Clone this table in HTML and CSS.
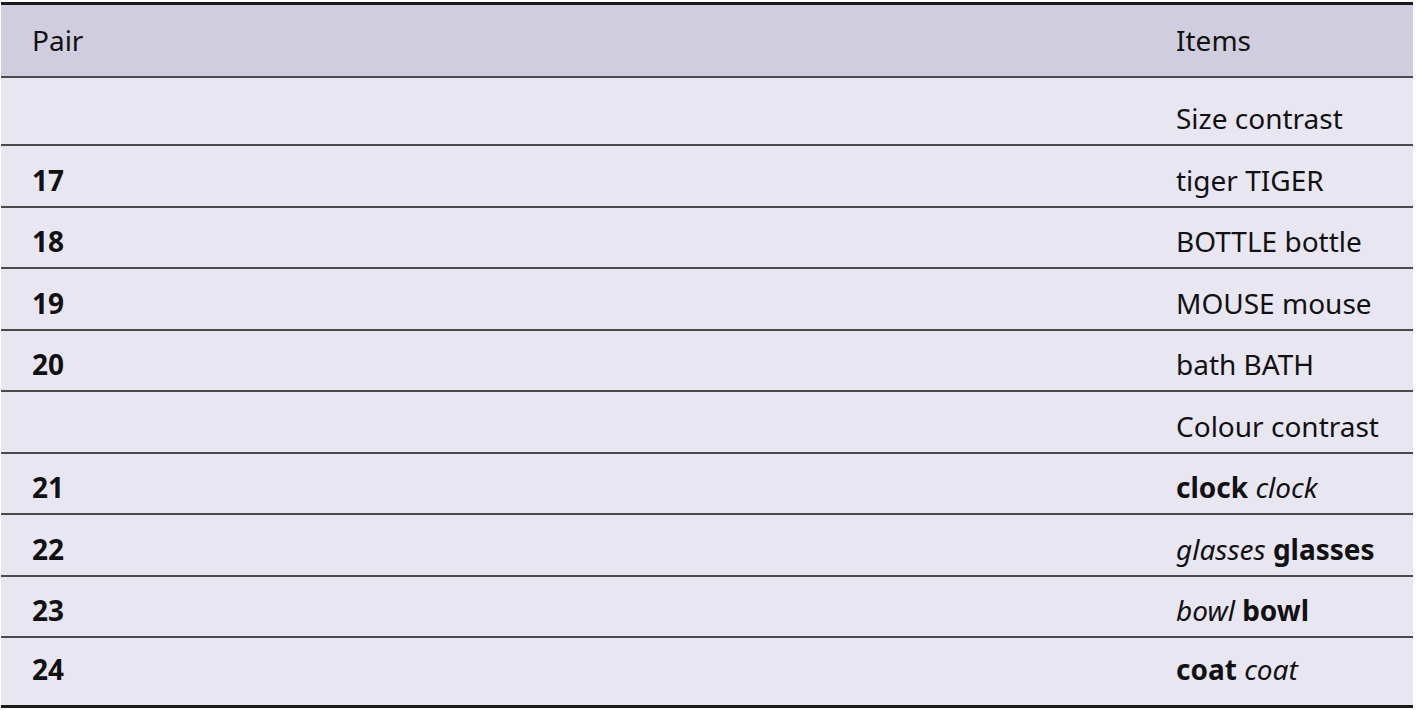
FILE: index.html
```html
<!DOCTYPE html>
<html lang="en">
<head>
<meta charset="utf-8">
<title>Pairs</title>
<link rel="stylesheet" href="styles.css">
</head>
<body>
<table class="pairs">
  <thead>
    <tr class="head-row"><th class="col-pair">Pair</th><th class="col-items">Items</th></tr>
  </thead>
  <tbody>
    <tr class="row first"><td class="col-pair"></td><td class="col-items">Size contrast</td></tr>
    <tr class="row"><td class="col-pair num">17</td><td class="col-items">tiger TIGER</td></tr>
    <tr class="row"><td class="col-pair num">18</td><td class="col-items">BOTTLE bottle</td></tr>
    <tr class="row"><td class="col-pair num">19</td><td class="col-items">MOUSE mouse</td></tr>
    <tr class="row"><td class="col-pair num">20</td><td class="col-items">bath BATH</td></tr>
    <tr class="row"><td class="col-pair"></td><td class="col-items">Colour contrast</td></tr>
    <tr class="row"><td class="col-pair num">21</td><td class="col-items"><b>clock</b> <i>clock</i></td></tr>
    <tr class="row"><td class="col-pair num">22</td><td class="col-items"><i>glasses</i> <b>glasses</b></td></tr>
    <tr class="row"><td class="col-pair num">23</td><td class="col-items"><i>bowl</i> <b>bowl</b></td></tr>
    <tr class="row last"><td class="col-pair num">24</td><td class="col-items"><b>coat</b> <i>coat</i></td></tr>
  </tbody>
</table>
</body>
</html>
```
FILE: styles.css
```css
html, body {
  margin: 0;
  padding: 0;
  background: #ffffff;
}
body {
  font-family: "Noto Sans", "Open Sans", sans-serif;
  font-size: 28px;
  color: #111111;
}
.pairs {
  width: 1412px;
  margin: 2px 0 0 1px;
  border-collapse: collapse;
  border-top: 3px solid #1a1a1a;
  border-bottom: 3px solid #1a1a1a;
}
.pairs th,
.pairs td {
  text-align: left;
  font-weight: 400;
  line-height: 36px;
  padding: 0;
  vertical-align: middle;
}
.head-row {
  background: #d0cdde;
  border-bottom: 2px solid #4a4a4a;
}
.head-row th {
  height: 70px;
  padding-bottom: 1px;
}
.row {
  background: #e8e6f1;
  border-bottom: 2px solid #4a4a4a;
}
.row td {
  height: 51.5px;
  padding-top: 8px;
}
.row.first td {
  height: 52px;
  padding-top: 14px;
}
.row.last {
  border-bottom: none;
}
.row.last td {
  height: 55px;
  padding-top: 3px;
  padding-bottom: 9px;
}
.pairs .col-pair {
  padding-left: 31px;
}
.pairs .col-items {
  width: 231px;
  padding-right: 6px;
}
.pairs .num {
  font-weight: 700;
}
b {
  font-weight: 700;
}
i {
  font-style: italic;
}
```
